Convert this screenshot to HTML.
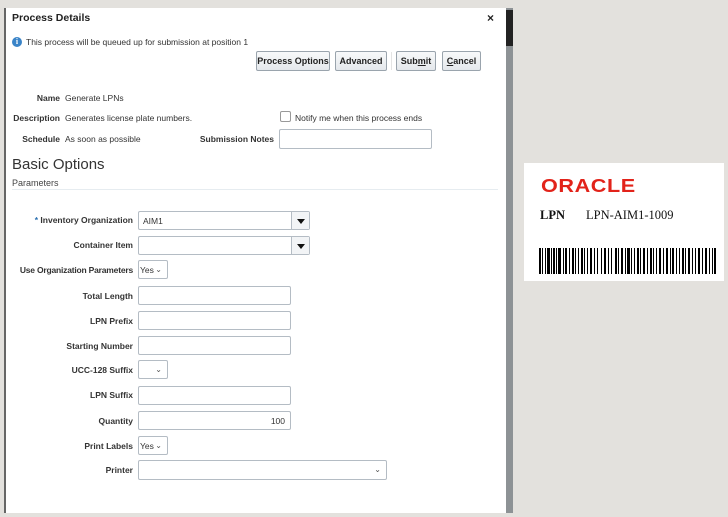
<!DOCTYPE html>
<html><head><meta charset="utf-8"><style>
*{margin:0;padding:0;box-sizing:border-box}
body{width:728px;height:517px;background:#e3e1dd;position:relative;overflow:hidden;font-family:"Liberation Sans",Arial,sans-serif;font-size:8.5px;color:#333}
.a{position:absolute}
#dlg{left:4px;top:8px;width:502px;height:505px;background:#fff;border-left:2px solid #666}
#sb{left:506px;top:8px;width:7px;height:505px;background:#8d9295}
#th{left:506px;top:10px;width:7px;height:36px;background:#222}
.lbl{font-weight:bold;text-align:right;color:#333}
.btn{border:1px solid #9aa4ad;background:linear-gradient(#f8f9fa,#e4e8ec);border-radius:2px;font-weight:bold;font-size:9px;text-align:center;line-height:19px;height:20px;color:#222}
.in{border:1px solid #b4bcc4;background:#fff;border-radius:2px}
.dd{position:absolute;right:0;top:0;width:18px;height:100%;border-left:1px solid #b4bcc4;background:#f2f4f6}
.dd:after{content:"";position:absolute;left:5px;top:7px;border:4px solid transparent;border-top:5px solid #111}
.ch{position:absolute;right:5px;top:2px;font-size:8px;color:#555}
</style></head><body>
<div class="a" id="dlg"></div>
<div class="a" id="sb"></div><div class="a" id="th"></div>
<div class="a" style="left:12px;top:12px;font-weight:bold;font-size:10.5px;color:#222">Process Details</div>
<div class="a" style="left:487px;top:11px;font-weight:bold;font-size:12px;color:#222">×</div>
<div class="a" style="left:12px;top:37px;width:10px;height:10px;border-radius:50%;background:#3a84c8;color:#fff;font-size:8px;text-align:center;line-height:10px;font-weight:bold;font-family:'Liberation Serif',serif">i</div>
<div class="a" style="left:26px;top:37px;font-size:8.5px">This process will be queued up for submission at position 1</div>
<div class="a btn" style="left:256px;top:51px;width:74px">Process Options</div>
<div class="a btn" style="left:335px;top:51px;width:52px">Advanced</div>
<div class="a" style="left:391px;top:52px;width:1px;height:18px;background:#e4e4e4"></div>
<div class="a btn" style="left:396px;top:51px;width:40px">Sub<u>m</u>it</div>
<div class="a btn" style="left:442px;top:51px;width:39px"><u>C</u>ancel</div>
<div class="a lbl" style="left:0;width:60px;top:93px">Name</div><div class="a" style="left:65px;top:93px">Generate LPNs</div>
<div class="a lbl" style="left:0;width:60px;top:113px">Description</div><div class="a" style="left:65px;top:113px">Generates license plate numbers.</div>
<div class="a" style="left:280px;top:111px;width:11px;height:11px;border:1px solid #999;border-radius:2px"></div>
<div class="a" style="left:295px;top:113px">Notify me when this process ends</div>
<div class="a lbl" style="left:0;width:60px;top:134px">Schedule</div><div class="a" style="left:65px;top:134px">As soon as possible</div>
<div class="a lbl" style="left:180px;width:94px;top:134px">Submission Notes</div>
<div class="a in" style="left:279px;top:129px;width:153px;height:20px"></div>
<div class="a" style="left:12px;top:156px;font-size:15px;color:#333">Basic Options</div>
<div class="a" style="left:12px;top:178px;font-size:9px;color:#444">Parameters</div>
<div class="a" style="left:12px;top:189px;width:486px;height:1px;background:#e6ecf0"></div>

<div class="a lbl" style="left:0;width:133px;top:215px"><span style="color:#2a6fb0">*</span> Inventory Organization</div>
<div class="a in" style="left:138px;top:211px;width:172px;height:19px"><span style="position:absolute;left:4px;top:4px">AIM1</span><div class="dd"></div></div>
<div class="a lbl" style="left:0;width:133px;top:240px">Container Item</div>
<div class="a in" style="left:138px;top:236px;width:172px;height:19px"><div class="dd"></div></div>
<div class="a lbl" style="left:0;width:133px;top:265px;letter-spacing:-0.2px">Use Organization Parameters</div>
<div class="a in" style="left:138px;top:260px;width:30px;height:19px"><span style="position:absolute;left:1px;top:4px">Yes</span><span class="ch" style="top:4px">⌄</span></div>
<div class="a lbl" style="left:0;width:133px;top:291px">Total Length</div>
<div class="a in" style="left:138px;top:286px;width:153px;height:19px"></div>
<div class="a lbl" style="left:0;width:133px;top:316px">LPN Prefix</div>
<div class="a in" style="left:138px;top:311px;width:153px;height:19px"></div>
<div class="a lbl" style="left:0;width:133px;top:341px">Starting Number</div>
<div class="a in" style="left:138px;top:336px;width:153px;height:19px"></div>
<div class="a lbl" style="left:0;width:133px;top:365px">UCC-128 Suffix</div>
<div class="a in" style="left:138px;top:360px;width:30px;height:19px"><span class="ch" style="top:4px">⌄</span></div>
<div class="a lbl" style="left:0;width:133px;top:390px">LPN Suffix</div>
<div class="a in" style="left:138px;top:386px;width:153px;height:19px"></div>
<div class="a lbl" style="left:0;width:133px;top:416px">Quantity</div>
<div class="a in" style="left:138px;top:411px;width:153px;height:19px"><span style="position:absolute;right:5px;top:4px">100</span></div>
<div class="a lbl" style="left:0;width:133px;top:441px">Print Labels</div>
<div class="a in" style="left:138px;top:436px;width:30px;height:19px"><span style="position:absolute;left:1px;top:4px">Yes</span><span class="ch" style="top:4px">⌄</span></div>
<div class="a lbl" style="left:0;width:133px;top:465px">Printer</div>
<div class="a in" style="left:138px;top:460px;width:249px;height:20px"><span class="ch" style="top:4px">⌄</span></div>

<div class="a" style="left:524px;top:163px;width:200px;height:118px;background:#fff"></div>
<div class="a" style="left:541px;top:176px;color:#e2231a;font-size:18px;font-weight:bold;letter-spacing:0.5px;transform:scaleX(1.2);transform-origin:left">ORACLE</div>
<div class="a" style="left:540px;top:208px;font-family:'Liberation Serif',serif;font-weight:bold;font-size:12.5px;color:#111">LPN</div>
<div class="a" style="left:586px;top:208px;font-family:'Liberation Serif',serif;font-size:12.5px;color:#111">LPN-AIM1-1009</div>
<svg class="a" style="left:539px;top:248px" width="178" height="26">
<g fill="#000">
<rect x="0" y="0" width="2" height="26"/><rect x="3" y="0" width="1" height="26"/><rect x="6" y="0" width="1" height="26"/><rect x="8" y="0" width="3" height="26"/><rect x="12" y="0" width="1" height="26"/><rect x="14" y="0" width="2" height="26"/><rect x="17" y="0" width="1" height="26"/><rect x="19" y="0" width="3" height="26"/><rect x="24" y="0" width="1" height="26"/><rect x="26" y="0" width="2" height="26"/><rect x="30" y="0" width="1" height="26"/><rect x="33" y="0" width="2" height="26"/><rect x="36" y="0" width="1" height="26"/><rect x="39" y="0" width="1" height="26"/><rect x="42" y="0" width="2" height="26"/><rect x="45" y="0" width="1" height="26"/><rect x="48" y="0" width="1" height="26"/><rect x="51" y="0" width="2" height="26"/><rect x="55" y="0" width="1" height="26"/><rect x="58" y="0" width="1" height="26"/><rect x="62" y="0" width="1" height="26"/><rect x="65" y="0" width="2" height="26"/><rect x="69" y="0" width="1" height="26"/><rect x="72" y="0" width="1" height="26"/><rect x="76" y="0" width="2" height="26"/><rect x="79" y="0" width="1" height="26"/><rect x="82" y="0" width="2" height="26"/><rect x="86" y="0" width="1" height="26"/><rect x="88" y="0" width="3" height="26"/><rect x="92" y="0" width="1" height="26"/><rect x="95" y="0" width="1" height="26"/><rect x="98" y="0" width="2" height="26"/><rect x="101" y="0" width="1" height="26"/><rect x="104" y="0" width="2" height="26"/><rect x="108" y="0" width="1" height="26"/><rect x="111" y="0" width="2" height="26"/><rect x="114" y="0" width="1" height="26"/><rect x="117" y="0" width="1" height="26"/><rect x="120" y="0" width="2" height="26"/><rect x="124" y="0" width="1" height="26"/><rect x="127" y="0" width="2" height="26"/><rect x="131" y="0" width="1" height="26"/><rect x="133" y="0" width="2" height="26"/><rect x="137" y="0" width="1" height="26"/><rect x="140" y="0" width="1" height="26"/><rect x="143" y="0" width="2" height="26"/><rect x="146" y="0" width="1" height="26"/><rect x="149" y="0" width="2" height="26"/><rect x="153" y="0" width="1" height="26"/><rect x="156" y="0" width="1" height="26"/><rect x="159" y="0" width="2" height="26"/><rect x="163" y="0" width="1" height="26"/><rect x="166" y="0" width="2" height="26"/><rect x="170" y="0" width="1" height="26"/><rect x="173" y="0" width="1" height="26"/><rect x="175" y="0" width="2" height="26"/>
</g></svg>
</body></html>
